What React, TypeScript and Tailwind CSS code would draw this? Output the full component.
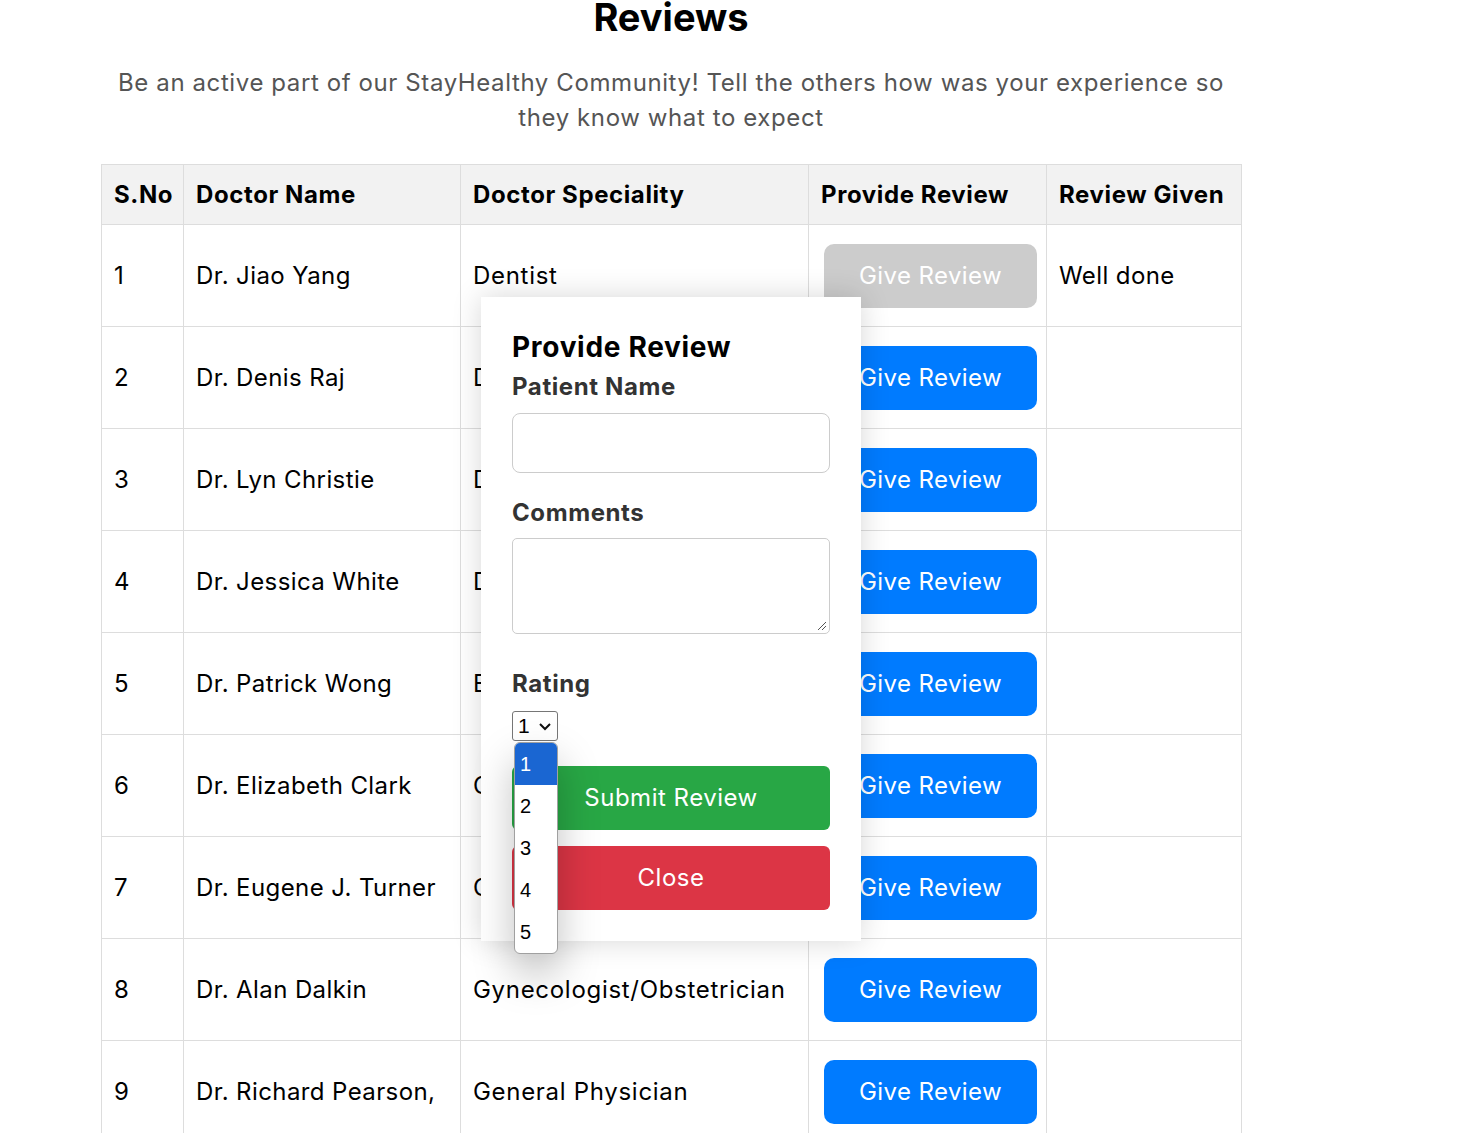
import React from "react";

const rows = [
  { n: 1, name: "Dr. Jiao Yang", spec: "Dentist", done: true, review: "Well done" },
  { n: 2, name: "Dr. Denis Raj", spec: "Dermatologist" },
  { n: 3, name: "Dr. Lyn Christie", spec: "Dermatologist" },
  { n: 4, name: "Dr. Jessica White", spec: "Dermatologist" },
  { n: 5, name: "Dr. Patrick Wong", spec: "ENT" },
  { n: 6, name: "Dr. Elizabeth Clark", spec: "Cardiologist" },
  { n: 7, name: "Dr. Eugene J. Turner", spec: "Cardiologist" },
  { n: 8, name: "Dr. Alan Dalkin", spec: "Gynecologist/Obstetrician" },
  { n: 9, name: "Dr. Richard Pearson,", spec: "General Physician" },
];

const font = { fontFamily: "Inter, 'Open Sans', sans-serif" };

export default function App() {
  return (
    <div className="relative w-[1466px] h-[1133px] overflow-hidden bg-white text-black" style={font}>
      <div className="ml-[101px] w-[1140px] -mt-[9px]">
        <h1 className="text-center text-[38px] font-bold leading-[52px]">Reviews</h1>
        <p className="mt-[22px] text-center text-[24px] tracking-[0.6px] leading-[35px] text-[#555]">
          Be an active part of our StayHealthy Community! Tell the others how was your experience so they know what to expect
        </p>
        <table className="mt-[29px] w-[1140px] border-collapse table-fixed text-[24px] tracking-[0.4px]">
          <colgroup>
            <col className="w-[82px]" />
            <col className="w-[277px]" />
            <col className="w-[348px]" />
            <col className="w-[238px]" />
            <col className="w-[195px]" />
          </colgroup>
          <thead>
            <tr className="h-[60px] bg-[#f2f2f2]">
              {["S.No", "Doctor Name", "Doctor Speciality", "Provide Review", "Review Given"].map((h) => (
                <th key={h} className="border border-[#dddddd] px-[12px] text-left font-bold whitespace-nowrap tracking-[0.6px]">
                  {h}
                </th>
              ))}
            </tr>
          </thead>
          <tbody>
            {rows.map((r) => (
              <tr key={r.n} className="h-[102px]">
                <td className="border border-[#dddddd] px-[12px]">{r.n}</td>
                <td className="border border-[#dddddd] px-[12px] whitespace-nowrap">{r.name}</td>
                <td className="border border-[#dddddd] px-[12px] whitespace-nowrap tracking-[0.7px]">{r.spec}</td>
                <td className="border border-[#dddddd] pl-[15px]">
                  <div
                    className={
                      r.done
                        ? "flex h-[64px] w-[213px] items-center justify-center rounded-[10px] bg-[#cccccc] text-white tracking-[0.4px]"
                        : "flex h-[64px] w-[213px] items-center justify-center rounded-[10px] bg-[#007bff] text-white tracking-[0.4px]"
                    }
                  >
                    Give Review
                  </div>
                </td>
                <td className="border border-[#dddddd] px-[12px]">{r.review ?? ""}</td>
              </tr>
            ))}
          </tbody>
        </table>
      </div>

      {/* Modal */}
      <div className="absolute left-[481px] top-[297px] h-[644px] w-[380px] bg-white px-[31px] pt-[30px] shadow-[0_0_28px_rgba(0,0,0,0.16)]">
        <h2 className="text-[28px] font-bold leading-[40px] tracking-[0.7px]">Provide Review</h2>
        <div className="mt-[5px] text-[24px] font-bold leading-[30px] tracking-[0.6px] text-[#333]">Patient Name</div>
        <div className="mt-[11px] h-[60px] w-[318px] rounded-[8px] border border-[#cccccc]" />
        <div className="mt-[25px] text-[24px] font-bold leading-[30px] tracking-[0.6px] text-[#333]">Comments</div>
        <div className="relative mt-[10px] h-[96px] w-[318px] rounded-[5px] border border-[#cccccc]">
          <svg className="absolute bottom-[2px] right-[2px]" width="12" height="12" viewBox="0 0 12 12">
            <path d="M11 3 L3 11 M11 7 L7 11" stroke="#555" strokeWidth="1" />
          </svg>
        </div>
        <div className="mt-[35px] text-[24px] font-bold leading-[30px] tracking-[0.6px] text-[#333]">Rating</div>
        <div
          className="mt-[12px] flex h-[30px] w-[46px] items-center justify-between rounded-[3px] border border-[#767676] pl-[5px] pr-[5px] text-[21px]"
          style={{ fontFamily: "'Liberation Sans', Arial, sans-serif" }}
        >
          <span>1</span>
          <svg width="14" height="9" viewBox="0 0 14 9">
            <path d="M2 2 L7 7 L12 2" stroke="#111" strokeWidth="2" fill="none" />
          </svg>
        </div>
        <div className="mt-[25px] flex h-[64px] w-[318px] items-center justify-center rounded-[6px] bg-[#28a745] text-[24px] tracking-[0.5px] text-white">
          Submit Review
        </div>
        <div className="mt-[16px] flex h-[64px] w-[318px] items-center justify-center rounded-[6px] bg-[#dc3545] text-[24px] tracking-[0.5px] text-white">
          Close
        </div>
      </div>

      {/* Open select list */}
      <div
        className="absolute left-[514px] top-[742px] w-[44px] overflow-hidden rounded-[6px] border border-[#a0a0a0] bg-white text-[20px] shadow-[0_20px_40px_rgba(0,0,0,0.25)]"
        style={{ fontFamily: "'Liberation Sans', Arial, sans-serif" }}
      >
        {[1, 2, 3, 4, 5].map((v) => (
          <div
            key={v}
            className={v === 1 ? "flex h-[42px] items-center bg-[#1a66d2] pl-[5px] text-white" : "flex h-[42px] items-center pl-[5px] text-black"}
          >
            {v}
          </div>
        ))}
      </div>
    </div>
  );
}
